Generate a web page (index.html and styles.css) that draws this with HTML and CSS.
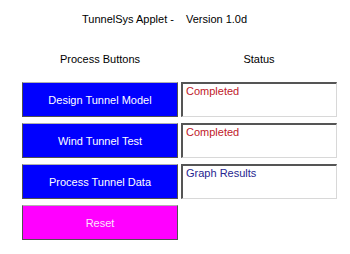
FILE: index.html
```html
<!DOCTYPE html>
<html>
<head>
<meta charset="utf-8">
<link rel="stylesheet" href="styles.css">
</head>
<body>
<div class="applet">
  <div class="title">
    <span>TunnelSys Applet -</span>
    <span>Version 1.0d</span>
  </div>
  <div class="grid">
    <div class="head">Process Buttons</div>
    <div class="head">Status</div>
    <div class="btn blue">Design Tunnel Model</div>
    <div class="status red">Completed</div>
    <div class="btn blue">Wind Tunnel Test</div>
    <div class="status red">Completed</div>
    <div class="btn blue">Process Tunnel Data</div>
    <div class="status navy">Graph Results</div>
    <div class="btn pink">Reset</div>
  </div>
</div>
</body>
</html>
```

FILE: styles.css
```css
html, body {
  margin: 0;
  padding: 0;
  background: #ffffff;
}
.applet {
  width: 350px;
  height: 254px;
  font-family: "Liberation Sans", Arial, sans-serif;
  font-size: 11px;
  line-height: 13px;
  color: #000;
}
.title {
  display: flex;
  gap: 12px;
  padding: 13px 0 0 82px;
}
.grid {
  display: grid;
  grid-template-columns: 156px 156px;
  grid-template-rows: 23px 35px 35px 35px 35px;
  column-gap: 3px;
  row-gap: 6px;
  margin: 27px 0 0 22px;
}
.head {
  align-self: start;
  text-align: center;
}
.btn {
  box-sizing: border-box;
  display: flex;
  align-items: center;
  justify-content: center;
  color: #ffffff;
  border: 1px solid #505050;
  border-top-color: #b0b0b0;
  padding-top: 1px;
}
.blue { background: #0000ff; }
.pink { background: #ff00ff; color: #fbe4fb; }
.status {
  box-sizing: border-box;
  background: #ffffff;
  border-top: 2px solid #555555;
  border-left: 2px solid #555555;
  border-right: 1px solid #d8d8d8;
  border-bottom: 1px solid #d8d8d8;
  padding: 1px 3px;
}
.red { color: #c0202a; }
.navy { color: #262690; }
```
